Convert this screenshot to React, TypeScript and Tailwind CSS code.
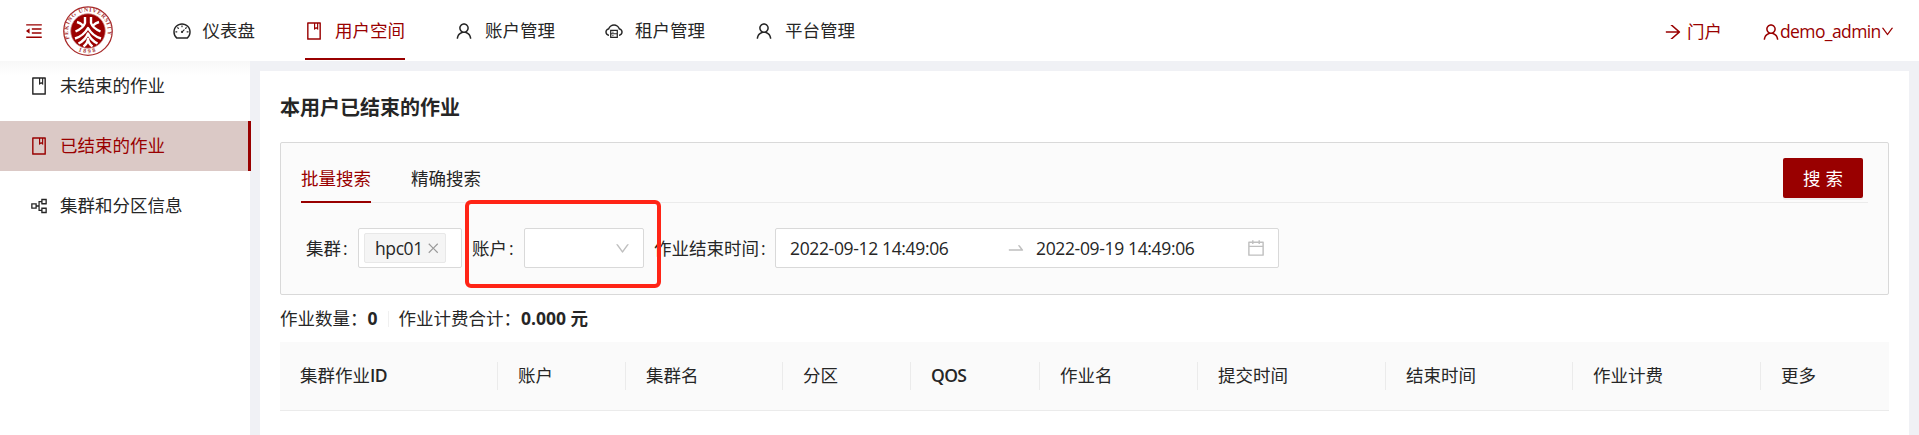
import type { ReactNode } from "react";
import {
  AiOutlineArrowRight,
  AiOutlineBook,
  AiOutlineCalendar,
  AiOutlineClose,
  AiOutlineCloudServer,
  AiOutlineDashboard,
  AiOutlineDown,
  AiOutlineMenuFold,
  AiOutlinePartition,
  AiOutlineSwapRight,
  AiOutlineUser,
} from "react-icons/ai";

function Logo() {
  return (
    <svg viewBox="0 0 100 100" className="h-[50px] w-[50px] shrink-0">
      <defs>
        <path id="ring-top" d="M 13 66 A 40 40 0 1 1 87 66" />
        <path id="ring-bottom" d="M 22 84 A 44 44 0 0 0 78 84" />
      </defs>
      <circle cx="50" cy="50" r="48.5" fill="#fff" stroke="#a82a2a" strokeWidth="2.5" />
      <circle cx="50" cy="50" r="34.5" fill="#9b0000" stroke="#c98080" strokeWidth="1.5" />
      <g fill="#a83838" fontFamily="Liberation Serif, serif" fontWeight="700" fontSize="12">
        <text>
          <textPath href="#ring-top" textLength="148">PEKING UNIVERSITY</textPath>
        </text>
        <text>
          <textPath href="#ring-bottom" startOffset="50%" textAnchor="middle" letterSpacing="4">1898</textPath>
        </text>
      </g>
      <g fill="none" stroke="#fff" strokeWidth="4.8" strokeLinejoin="round">
        <path d="M44 22V34Q41 44 25 51" />
        <path d="M56 22V34Q59 44 75 51" />
        <path d="M28 32Q35 34 40 39" />
        <path d="M72 32Q65 34 60 39" />
        <path d="M24 65Q41 60 50 44Q59 60 76 65" />
        <path d="M31 75Q45 68 50 55Q55 68 69 75" />
        <path d="M41 81Q49 75 50 66Q51 75 59 81" />
      </g>
    </svg>
  );
}

function NavItem({ icon, label, active }: { icon: ReactNode; label: string; active?: boolean }) {
  return (
    <div
      className={
        active
          ? "flex h-[60px] items-center gap-[11px] border-b-2 border-[#990000] pt-[3px] text-[#990000]"
          : "flex h-[60px] items-center gap-[11px] border-b-2 border-transparent pt-[3px]"
      }
    >
      <span className="-ml-[1px] w-5">{icon}</span>
      <span>{label}</span>
    </div>
  );
}

function SideItem({ icon, label, active }: { icon: ReactNode; label: string; active?: boolean }) {
  return (
    <div
      className={
        active
          ? "flex h-[50px] items-center gap-[11px] border-r-[3px] border-[#990000] bg-[#dbc9c6] pl-[29px] text-[#990000]"
          : "flex h-[50px] items-center gap-[11px] pl-[29px]"
      }
    >
      {icon}
      <span>{label}</span>
    </div>
  );
}

const columns: { title: string; latin?: string; width: string }[] = [
  { title: "集群作业", latin: "ID", width: "w-[218px]" },
  { title: "账户", width: "w-[128px]" },
  { title: "集群名", width: "w-[157px]" },
  { title: "分区", width: "w-[128px]" },
  { title: "", latin: "QOS", width: "w-[129px]" },
  { title: "作业名", width: "w-[158px]" },
  { title: "提交时间", width: "w-[188px]" },
  { title: "结束时间", width: "w-[187px]" },
  { title: "作业计费", width: "w-[188px]" },
  { title: "更多", width: "flex-1" },
];

export default function App() {
  return (
    <div className="flex h-[435px] w-[1919px] flex-col overflow-hidden bg-[#f0f1f5] font-['Open_Sans','Noto_Sans_CJK_SC',sans-serif] text-[17.5px] leading-[27.5px] whitespace-nowrap text-[#262626]">
      <header className="flex h-[61px] shrink-0 items-start bg-white">
        <div className="flex h-[62px] w-[172.5px] items-center gap-[19px] pl-[24px] text-[#990000]">
          <AiOutlineMenuFold size={20} />
          <Logo />
        </div>
        <nav className="flex gap-[50px]">
          <NavItem icon={<AiOutlineDashboard size={20} />} label="仪表盘" />
          <NavItem icon={<AiOutlineBook size={20} />} label="用户空间" active />
          <NavItem icon={<AiOutlineUser size={20} />} label="账户管理" />
          <NavItem icon={<AiOutlineCloudServer size={20} />} label="租户管理" />
          <NavItem icon={<AiOutlineUser size={20} />} label="平台管理" />
        </nav>
        <div className="ml-auto flex h-[61px] items-center pt-[2px] pr-[24px] text-[#990000]">
          <AiOutlineArrowRight size={20} />
          <span className="ml-[4px]">门户</span>
          <AiOutlineUser size={20} className="ml-[39px]" />
          <span className="-ml-px w-[100px] tracking-[-0.6px]">demo_admin</span>
          <AiOutlineDown size={15} />
        </div>
      </header>

      <div className="flex min-h-0 flex-1">
        <aside className="w-[251px] shrink-0">
          <div className="h-full w-[250px] bg-white bg-linear-to-b from-[#f8f8f8] to-white to-[14px]">
            <SideItem icon={<AiOutlineBook size={20} />} label="未结束的作业" />
            <div className="mt-[10px] w-[251px]">
              <SideItem icon={<AiOutlineBook size={20} />} label="已结束的作业" active />
            </div>
            <div className="mt-[10px]">
              <SideItem icon={<AiOutlinePartition size={20} />} label="集群和分区信息" />
            </div>
          </div>
        </aside>

        <main className="mt-[10px] ml-[9px] w-[1649px] bg-white px-5 pt-5">
          <h1 className="h-[51px] pt-px text-[20px] leading-[32px] font-bold">本用户已结束的作业</h1>

          <section className="relative h-[153px] rounded-[2px] border border-[#d9d9d9] bg-[#fbfbfb] px-5">
            <div className="flex h-[60px] items-end border-b border-[#ebebeb]">
              <div className="flex h-[60px] shrink-0 translate-y-px gap-[40px]">
                <div className="border-b-2 border-[#990000] pt-[22px] text-[#990000]">批量搜索</div>
                <div className="pt-[22px]">精确搜索</div>
              </div>
              <button className="mr-[5px] mb-[4px] ml-auto h-[40px] w-[80px] rounded-[2px] bg-[#990000] pt-px pl-[5px] tracking-[5px] text-white shadow-[0_2px_0_rgba(0,0,0,0.045)]">
                搜索
              </button>
            </div>
            <div className="mt-[25px] flex h-[40px] items-center pl-[5px]">
              <label className="w-[52px] pt-px">集群<span className="pl-[2px]">:</span></label>
              <div className="flex h-[40px] w-[104px] items-center rounded-[2px] border border-[#d9d9d9] bg-white pl-[5px]">
                <div className="flex h-[30px] w-[82px] items-center rounded-[2px] border border-[#e8e8e8] bg-[#f5f5f5] pl-[10px]">
                  <span className="w-[51px] pt-px tracking-[-0.4px]">hpc01</span>
                  <AiOutlineClose size={14.5} className="text-[#999999]" />
                </div>
              </div>
              <label className="ml-[10px] w-[52px] pt-px">账户<span className="pl-[2px]">:</span></label>
              <div className="flex h-[40px] w-[120px] items-center justify-end rounded-[2px] border border-[#d9d9d9] bg-white pr-[12px]">
                <AiOutlineDown size={17} className="text-[#bfbfbf]" />
              </div>
              <label className="ml-[10px] w-[121px] pt-px">作业结束时间<span className="pl-[2px]">:</span></label>
              <div className="flex h-[40px] w-[504px] items-center rounded-[2px] border border-[#d9d9d9] bg-white pl-[14px]">
                <span className="w-[216px] pt-px tracking-[-0.35px]">2022-09-12 14:49:06</span>
                <AiOutlineSwapRight size={20} className="mr-[10px] text-[#bfbfbf]" />
                <span className="w-[210px] pt-px tracking-[-0.35px]">2022-09-19 14:49:06</span>
                <AiOutlineCalendar size={20} className="text-[#bfbfbf]" />
              </div>
            </div>
            <div className="absolute top-[57px] left-[184px] h-[88px] w-[196px] rounded-[6px] border-[4px] border-[#ff2416]" />
          </section>

          <div className="flex h-[47px] items-center pt-[3px] pb-[2px]">
            <span>作业数量：</span>
            <strong>0</strong>
            <span className="mx-[10px] h-[16px] w-px bg-[#f0f0f0]" />
            <span>作业计费合计：</span>
            <strong>0.000 元</strong>
          </div>

          <div className="flex h-[69px] items-center border-b border-[#ebebeb] bg-[#fafafa]">
            {columns.map((c, i) => (
              <div
                key={i}
                className={
                  i < columns.length - 1
                    ? `${c.width} flex h-[28px] shrink-0 items-center border-r border-[#ebebeb] pl-5`
                    : `${c.width} flex h-[28px] items-center pl-5`
                }
              >
                {c.title}
                {c.latin && <span className="font-semibold tracking-[-0.6px]">{c.latin}</span>}
              </div>
            ))}
          </div>
        </main>
      </div>
    </div>
  );
}
